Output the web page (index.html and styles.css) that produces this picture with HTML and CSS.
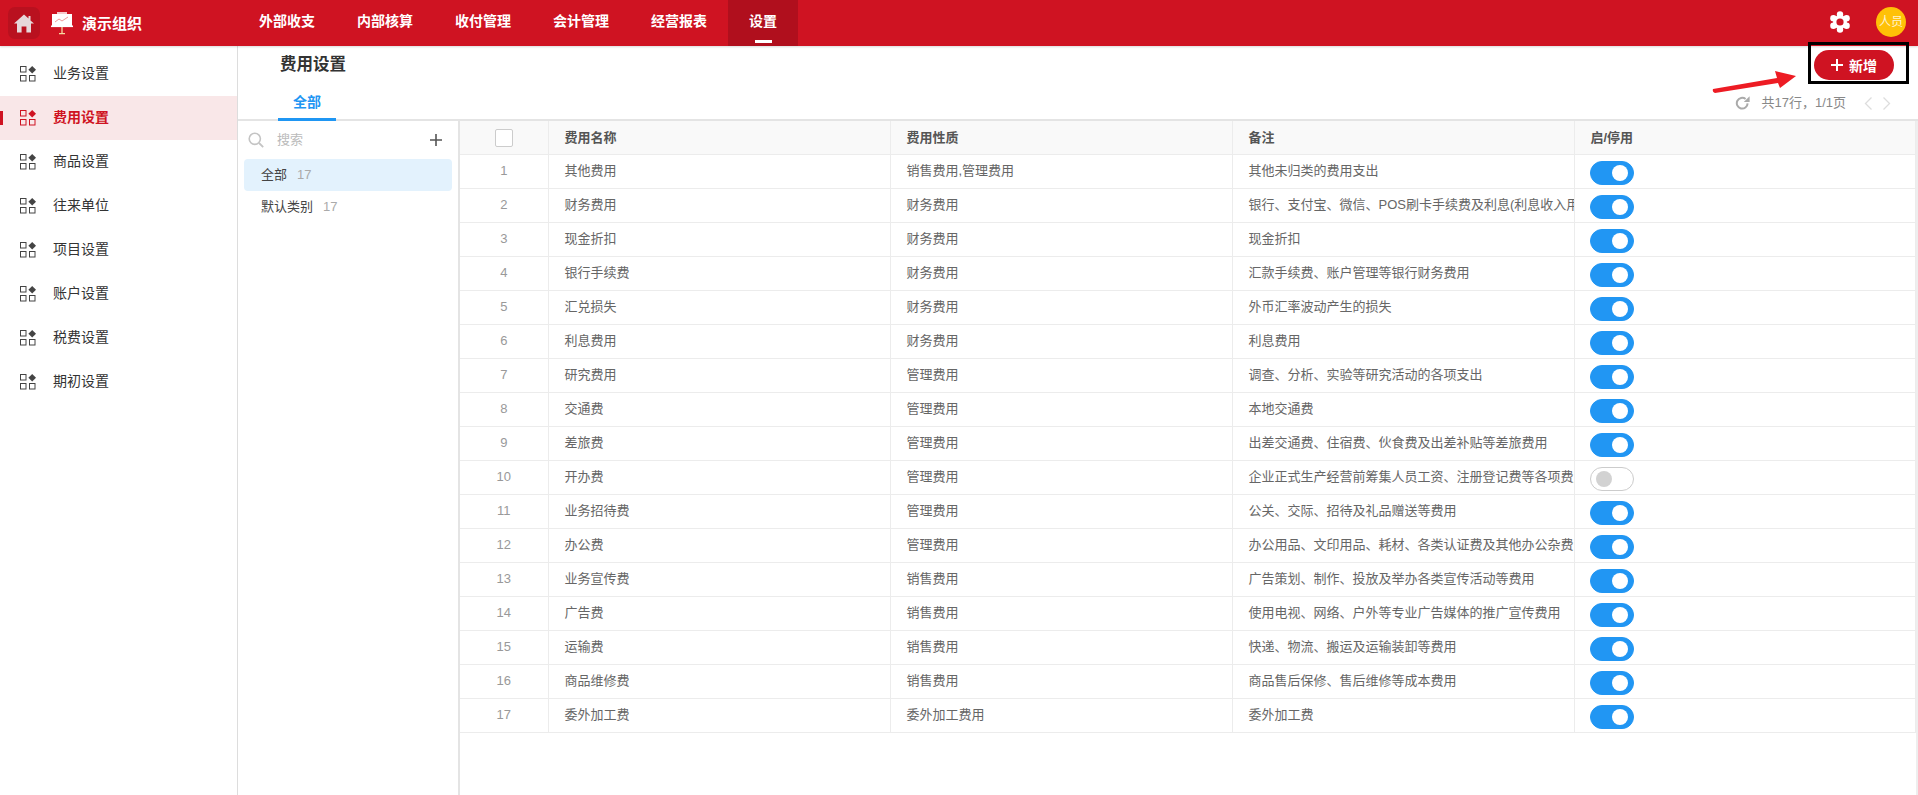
FILE: index.html
```html
<!DOCTYPE html>
<html lang="zh-CN">
<head>
<meta charset="utf-8">
<title>费用设置</title>
<link rel="stylesheet" href="styles.css">
</head>
<body>
<svg class="defs" width="0" height="0">
  <symbol id="menu-icon" viewBox="0 0 16 16">
    <rect x="0.5" y="0.5" width="5.5" height="5.5" fill="none" stroke="currentColor"/>
    <rect x="0.5" y="9.5" width="5.5" height="5.5" fill="none" stroke="currentColor"/>
    <rect x="9.5" y="9.5" width="5.5" height="5.5" fill="none" stroke="currentColor"/>
    <path d="M12.2 0 L16 3.8 L12.2 7.6 L8.4 3.8 Z" fill="currentColor"/>
  </symbol>
</svg>
<header class="topbar">
  <div class="brand">
    <div class="home">
      <svg width="20" height="19" viewBox="0 0 20 19"><path d="M10 0.5 L14.5 4.6 L14.5 2 L16.5 2 L16.5 6.4 L20 9.6 L17 9.6 L17 18.5 L12.4 18.5 L12.4 12.5 L7.6 12.5 L7.6 18.5 L3 18.5 L3 9.6 L0 9.6 Z" fill="#e6d8da"/></svg>
    </div>
    <svg class="board" width="22" height="24" viewBox="0 0 22 24">
      <rect x="1" y="3" width="20" height="12" fill="#fff"/>
      <rect x="0" y="14.5" width="22" height="1.6" fill="#fff"/>
      <rect x="6" y="1" width="10" height="2" fill="#f6c9cc"/>
      <path d="M4 11 L8 8 L11 10 L17 6" fill="none" stroke="#ee9a9a" stroke-width="1"/>
      <path d="M11 16 V22 M8 22.6 H14" stroke="#f7d9a0" stroke-width="1.3" fill="none"/>
    </svg>
    <span class="org">演示组织</span>
  </div>
  <nav class="nav">
    <a class="nav-item">外部收支</a>
    <a class="nav-item">内部核算</a>
    <a class="nav-item">收付管理</a>
    <a class="nav-item">会计管理</a>
    <a class="nav-item">经营报表</a>
    <a class="nav-item active">设置</a>
  </nav>
  <div class="top-right">
    <svg width="20" height="22" viewBox="0 0 20 22">
      <g fill="#fff">
        <circle cx="10" cy="11" r="7"/>
        <circle cx="10" cy="3.4" r="3.2"/>
        <circle cx="10" cy="18.6" r="3.2"/>
        <circle cx="3.4" cy="7.2" r="3.2"/>
        <circle cx="16.6" cy="7.2" r="3.2"/>
        <circle cx="3.4" cy="14.8" r="3.2"/>
        <circle cx="16.6" cy="14.8" r="3.2"/>
      </g>
      <circle cx="10" cy="11" r="3.6" fill="#cf1322"/>
    </svg>
    <div class="avatar">人员</div>
  </div>
</header>
<div class="body">
  <aside class="sidebar">
    <div class="side-item"><svg class="side-icon"><use href="#menu-icon"/></svg>业务设置</div>
    <div class="side-item current"><svg class="side-icon"><use href="#menu-icon"/></svg>费用设置</div>
    <div class="side-item"><svg class="side-icon"><use href="#menu-icon"/></svg>商品设置</div>
    <div class="side-item"><svg class="side-icon"><use href="#menu-icon"/></svg>往来单位</div>
    <div class="side-item"><svg class="side-icon"><use href="#menu-icon"/></svg>项目设置</div>
    <div class="side-item"><svg class="side-icon"><use href="#menu-icon"/></svg>账户设置</div>
    <div class="side-item"><svg class="side-icon"><use href="#menu-icon"/></svg>税费设置</div>
    <div class="side-item"><svg class="side-icon"><use href="#menu-icon"/></svg>期初设置</div>
  </aside>
  <main class="main">
    <div class="head">
      <div class="head-left">
        <h1 class="title">费用设置</h1>
        <div class="tab">全部</div>
      </div>
      <div class="head-right">
        <button class="add-btn"><svg width="12" height="12" viewBox="0 0 12 12"><path d="M6 0 V12 M0 6 H12" stroke="#fff" stroke-width="2"/></svg>新增</button>
        <div class="pager">
          <svg class="refresh" width="15" height="14" viewBox="0 0 15 14"><path d="M12.6 7.4 A5.4 5.4 0 1 1 10.6 3" fill="none" stroke="#aaa" stroke-width="2"/><path d="M14.6 0.2 V6 H8.8 Z" fill="#aaa"/></svg>
          <span>共17行，1/1页</span>
          <svg class="chev" width="27" height="13" viewBox="0 0 27 13"><path d="M7.5 0.5 L1.5 6.5 L7.5 12.5 M19.5 0.5 L25.5 6.5 L19.5 12.5" fill="none" stroke="#ddd" stroke-width="1.3"/></svg>
        </div>
      </div>
    </div>
    <div class="content">
      <section class="cats">
        <div class="search">
          <svg width="16" height="16" viewBox="0 0 16 16"><circle cx="6.8" cy="6.8" r="5.6" fill="none" stroke="#c4c4c4" stroke-width="1.6"/><path d="M11 11 L15.2 15.2" stroke="#c4c4c4" stroke-width="1.8"/></svg>
          <span class="search-text">搜索</span>
          <svg width="12" height="12" viewBox="0 0 12 12"><path d="M6 0 V12 M0 6 H12" stroke="#555" stroke-width="1.6"/></svg>
        </div>
        <div class="cat selected">全部<span class="count">17</span></div>
        <div class="cat">默认类别<span class="count">17</span></div>
      </section>
      <section class="table-wrap">
        <table class="grid">
          <colgroup><col class="c-no"><col class="c-name"><col class="c-kind"><col class="c-note"><col></colgroup>
          <thead>
            <tr><th class="no"><span class="check"></span></th><th>费用名称</th><th>费用性质</th><th>备注</th><th>启/停用</th></tr>
          </thead>
          <tbody>
            <tr><td class="no">1</td><td>其他费用</td><td>销售费用,管理费用</td><td>其他未归类的费用支出</td><td><span class="switch on"></span></td></tr>
            <tr><td class="no">2</td><td>财务费用</td><td>财务费用</td><td>银行、支付宝、微信、POS刷卡手续费及利息(利息收入用负数)</td><td><span class="switch on"></span></td></tr>
            <tr><td class="no">3</td><td>现金折扣</td><td>财务费用</td><td>现金折扣</td><td><span class="switch on"></span></td></tr>
            <tr><td class="no">4</td><td>银行手续费</td><td>财务费用</td><td>汇款手续费、账户管理等银行财务费用</td><td><span class="switch on"></span></td></tr>
            <tr><td class="no">5</td><td>汇兑损失</td><td>财务费用</td><td>外币汇率波动产生的损失</td><td><span class="switch on"></span></td></tr>
            <tr><td class="no">6</td><td>利息费用</td><td>财务费用</td><td>利息费用</td><td><span class="switch on"></span></td></tr>
            <tr><td class="no">7</td><td>研究费用</td><td>管理费用</td><td>调查、分析、实验等研究活动的各项支出</td><td><span class="switch on"></span></td></tr>
            <tr><td class="no">8</td><td>交通费</td><td>管理费用</td><td>本地交通费</td><td><span class="switch on"></span></td></tr>
            <tr><td class="no">9</td><td>差旅费</td><td>管理费用</td><td>出差交通费、住宿费、伙食费及出差补贴等差旅费用</td><td><span class="switch on"></span></td></tr>
            <tr><td class="no">10</td><td>开办费</td><td>管理费用</td><td>企业正式生产经营前筹集人员工资、注册登记费等各项费用</td><td><span class="switch"></span></td></tr>
            <tr><td class="no">11</td><td>业务招待费</td><td>管理费用</td><td>公关、交际、招待及礼品赠送等费用</td><td><span class="switch on"></span></td></tr>
            <tr><td class="no">12</td><td>办公费</td><td>管理费用</td><td>办公用品、文印用品、耗材、各类认证费及其他办公杂费</td><td><span class="switch on"></span></td></tr>
            <tr><td class="no">13</td><td>业务宣传费</td><td>销售费用</td><td>广告策划、制作、投放及举办各类宣传活动等费用</td><td><span class="switch on"></span></td></tr>
            <tr><td class="no">14</td><td>广告费</td><td>销售费用</td><td>使用电视、网络、户外等专业广告媒体的推广宣传费用</td><td><span class="switch on"></span></td></tr>
            <tr><td class="no">15</td><td>运输费</td><td>销售费用</td><td>快递、物流、搬运及运输装卸等费用</td><td><span class="switch on"></span></td></tr>
            <tr><td class="no">16</td><td>商品维修费</td><td>销售费用</td><td>商品售后保修、售后维修等成本费用</td><td><span class="switch on"></span></td></tr>
            <tr><td class="no">17</td><td>委外加工费</td><td>委外加工费用</td><td>委外加工费</td><td><span class="switch on"></span></td></tr>
          </tbody>
        </table>
      </section>
    </div>
  </main>
</div>
<div class="mark-box"></div>
<svg class="mark-arrow" width="90" height="32" viewBox="0 0 90 32"><path d="M2 21 L66 10 L64 3 L85 8 L69 20 L67 15 L4 25 Q1 24 2 21 Z" fill="#ed1c24"/></svg>
</body>
</html>
```
FILE: styles.css
```css
* { box-sizing: border-box; }
html, body { height: 100%; }
body {
  margin: 0;
  height: 795px;
  overflow: hidden;
  display: flex;
  flex-direction: column;
  background: #fff;
  color: #333;
  font: 13px/1.4 "Liberation Sans", "Noto Sans CJK SC", sans-serif;
}
.defs { position: absolute; }

/* top bar */
.topbar {
  height: 46px;
  flex: none;
  display: flex;
  align-items: stretch;
  background: #cf1322;
  color: #fff;
  box-shadow: 0 1px 2px rgba(0, 0, 0, .15);
  position: relative;
  z-index: 1;
}
.brand {
  width: 238px;
  flex: none;
  display: flex;
  align-items: center;
  padding-left: 8px;
}
.home {
  width: 32px;
  height: 32px;
  border-radius: 7px;
  background: #b9111f;
  display: flex;
  align-items: center;
  justify-content: center;
}
.board { margin-left: 11px; }
.org { margin-left: 9px; font-size: 15px; font-weight: 700; }
.nav { display: flex; }
.nav-item {
  padding: 0 21px;
  line-height: 42px;
  font-size: 14px;
  font-weight: 700;
  color: #fff;
  position: relative;
}
.nav-item.active { background: #b00f1d; }
.nav-item.active::after {
  content: "";
  position: absolute;
  left: 27px;
  bottom: 3px;
  width: 17px;
  height: 3px;
  background: #fff;
}
.top-right {
  margin-left: auto;
  display: flex;
  align-items: center;
  gap: 26px;
  padding: 0 12px 2px 0;
}
.avatar {
  width: 30px;
  height: 30px;
  border-radius: 50%;
  background: #ffc107;
  color: #fff3cf;
  font-size: 12px;
  line-height: 30px;
  text-align: center;
}

/* layout */
.body { flex: 1; display: flex; min-height: 0; }
.sidebar {
  width: 238px;
  flex: none;
  padding-top: 6px;
  border-right: 1px solid #ddd;
}
.side-item {
  height: 44px;
  display: flex;
  align-items: center;
  padding-left: 20px;
  font-size: 14px;
  color: #333;
  position: relative;
}
.side-icon { width: 16px; height: 16px; margin-right: 17px; color: #444; }
.side-item.current { background: #f9e7e8; color: #cf1322; font-weight: 700; }
.side-item.current .side-icon { color: #cf1322; }
.side-item.current::before {
  content: "";
  position: absolute;
  left: 0;
  top: 15px;
  width: 3px;
  height: 14px;
  background: #cf1322;
}
.main { flex: 1; min-width: 0; display: flex; flex-direction: column; }

/* page header */
.head {
  height: 75px;
  flex: none;
  display: flex;
  justify-content: space-between;
  border-bottom: 2px solid #e4e4e4;
}
.head-left { padding-left: 40px; }
.title {
  margin: 7px 0 0 2px;
  font-size: 16.5px;
  line-height: 22px;
  font-weight: 700;
  color: #333;
}
.tab {
  margin-top: 12px;
  width: 58px;
  height: 34px;
  line-height: 30px;
  text-align: center;
  font-size: 14px;
  font-weight: 700;
  color: #1f96f3;
  border-bottom: 3px solid #1f96f3;
}
.head-right {
  padding: 4px 24px 0 0;
  display: flex;
  flex-direction: column;
  align-items: flex-end;
}
.add-btn {
  width: 80px;
  height: 30px;
  border: 0;
  border-radius: 15px;
  background: #cf1322;
  color: #fff;
  font: 700 14px "Liberation Sans", "Noto Sans CJK SC", sans-serif;
  display: flex;
  align-items: center;
  justify-content: center;
  gap: 6px;
  padding: 0;
}
.pager {
  display: flex;
  align-items: center;
  margin-top: 14px;
  margin-right: 3px;
  color: #888;
  font-size: 13px;
  line-height: 18px;
}
.refresh { margin-right: 11px; }
.chev { margin-left: 18px; }

/* content */
.content { flex: 1; display: flex; min-height: 0; }
.cats {
  width: 222px;
  flex: none;
  padding: 0 6px;
  border-right: 2px solid #e4e4e4;
}
.search {
  height: 38px;
  display: flex;
  align-items: center;
  padding: 0 10px 0 4px;
  color: #bbb;
}
.search-text { flex: 1; margin-left: 13px; }
.cat {
  height: 32px;
  line-height: 32px;
  padding-left: 17px;
  border-radius: 4px;
  color: #444;
}
.cat.selected { background: #e3f2fd; }
.count { margin-left: 10px; color: #aaa; font-size: 13px; }
.table-wrap { flex: 1; min-width: 0; border-right: 2px solid #eee; }
.grid {
  width: 100%;
  table-layout: fixed;
  border-collapse: collapse;
}
.c-no { width: 88px; }
.c-name { width: 342px; }
.c-kind { width: 342px; }
.c-note { width: 342px; }
.grid th, .grid td {
  height: 34px;
  padding: 1px 0 0 16px;
  border-bottom: 1px solid #ececec;
  border-right: 1px solid #ececec;
  white-space: nowrap;
  overflow: hidden;
  text-align: left;
  font-size: 13px;
  color: #666;
}
.grid th { height: 33px; background: #f9f9f9; font-weight: 700; color: #555; }
.grid th.no, .grid td.no { padding: 1px 0 0; text-align: center; color: #999; font-weight: 400; }
.check {
  display: block;
  width: 18px;
  height: 18px;
  margin: 0 auto;
  background: #fff;
  border: 1px solid #ccc;
  border-radius: 2px;
}
.switch {
  display: block;
  width: 44px;
  height: 24px;
  margin: 2px 0 0 -1px;
  border: 1px solid #ccc;
  border-radius: 12px;
  background: #fff;
  position: relative;
}
.switch::after {
  content: "";
  position: absolute;
  left: 5px;
  top: 3px;
  width: 16px;
  height: 16px;
  border-radius: 50%;
  background: #d2d2d2;
}
.switch.on { background: #2196f3; border-color: #2196f3; }
.switch.on::after { left: 21px; background: #fff; }

/* annotations drawn over the screenshot */
.mark-box {
  position: absolute;
  z-index: 2;
  left: 1808px;
  top: 42px;
  width: 101px;
  height: 42px;
  border: 3px solid #000;
  pointer-events: none;
}
.mark-arrow { position: absolute; z-index: 2; left: 1711px; top: 68px; }
```
